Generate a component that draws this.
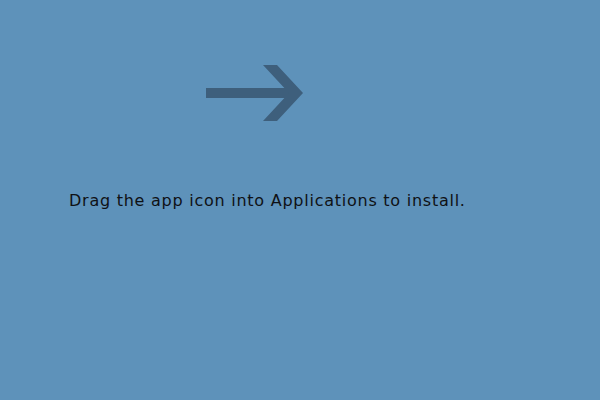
export default function App() {
  return (
    <div className="w-[600px] h-[400px] bg-[#5e92ba] overflow-hidden" style={{ fontFamily: '"DejaVu Sans", Verdana, sans-serif' }}>
      <div className="pt-[65px] pl-[206px]">
        <svg width="98" height="56" viewBox="206 65 98 56" className="block">
          <rect x="206" y="88" width="90" height="10" fill="#3e5f7c" />
          <polygon points="263,65 277,65 303,93 277,121 263,121 289,93" fill="#3e5f7c" />
        </svg>
      </div>
      <p className="mt-[70px] ml-[69px] text-[16px] leading-[20px] tracking-[0.75px] text-[#0f1115]">
        Drag the app icon into Applications to install.
      </p>
    </div>
  );
}
